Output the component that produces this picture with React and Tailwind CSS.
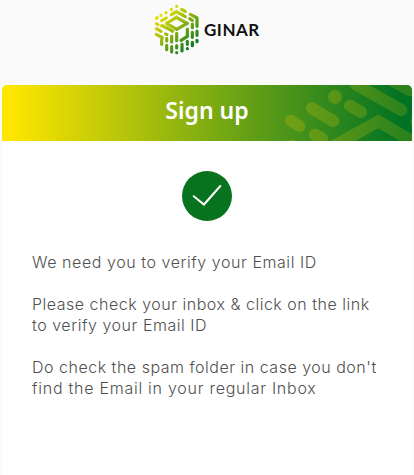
const lines = [
  { text: 'We need you to verify your Email ID', cls: 'tracking-[0.56px]' },
  { text: '' },
  { text: 'Please check your inbox & click on the link', cls: 'tracking-[0.51px]' },
  { text: 'to verify your Email ID', cls: 'tracking-[0.54px]' },
  { text: '' },
  { text: "Do check the spam folder in case you don't", cls: 'tracking-[0.51px]' },
  { text: 'find the Email in your regular Inbox', cls: 'tracking-[0.74px]' },
];

function LogoMark() {
  return (
    <svg className="h-[60px] w-[65px] shrink-0" viewBox="0 0 195 180" fill="none">
      <defs>
        <linearGradient id="mark" gradientUnits="userSpaceOnUse" x1="42" y1="38" x2="138" y2="142">
          <stop offset="0" stopColor="#f5e600" />
          <stop offset="0.45" stopColor="#9cba0c" />
          <stop offset="1" stopColor="#0b7a22" />
        </linearGradient>
      </defs>
      <g stroke="url(#mark)" strokeWidth="9.5" strokeLinecap="round">
        <path d="M95 19h.1M79 28h.1M63 38h.1M110 28l11 6M136 43l19 10M79 44l15-9 27 15M48 46h.1M34 55l3-2M50 62l14-8M134 56l8 5" />
        <path d="M34 71l5 3M52 77l10 6M34 86l14 8M62 102l4 2M34 103l18 10M50 77v1M112 44h.1" />
        <path d="M94 52L66 69M94 52l32 18M126 70L95 88 66 71M66 84l16 9" strokeLinecap="square" />
        <path d="M127 87v22l-19 12M142 72v11M142 97v15M142 127v10M156 54v25M156 93v13M156 121v4" />
        <path d="M50 119v14M65 115v8M65 136v13M80 108v18M80 140v16M95 100v22M95 137v7M95 158h.1M111 132v21M127 124v9M127 146h.1" />
      </g>
    </svg>
  );
}

function HeaderPattern() {
  return (
    <svg className="absolute right-0 top-0 h-14 w-[138px]" viewBox="0 30 414 168" fill="none">
      <defs>
        <linearGradient id="pattern" gradientUnits="userSpaceOnUse" x1="30" y1="0" x2="414" y2="0">
          <stop offset="0" stopColor="#b7b50c" stopOpacity="0.36" />
          <stop offset="1" stopColor="#b7b50c" stopOpacity="0.23" />
        </linearGradient>
      </defs>
      <g stroke="url(#pattern)" strokeLinecap="round" strokeWidth="36">
        <path d="M51 137l25 16M114 100l64 38M228 92l33 19M123 179l21 11M245 28l137 77M350 14l58 32" />
        <path d="M160 224L313 139l120 70" strokeLinecap="butt" />
        <path d="M54 212h.1M428 136v8" />
      </g>
      <circle cx="183" cy="66" r="21" fill="url(#pattern)" />
    </svg>
  );
}

export default function App() {
  return (
    <div className="flex h-[475px] w-[414px] flex-col overflow-hidden bg-[#fafafa]">
      <header className="flex h-[85px] items-start pl-[145px]">
        <LogoMark />
        <div className="-ml-[6px] mt-5 whitespace-nowrap font-['Lato','Liberation_Sans',sans-serif] text-[17px] font-bold leading-5 tracking-[0.5px] text-[#111]">GINAR</div>
      </header>
      <main className="mx-[2px] flex flex-1 flex-col overflow-hidden rounded-t-[5px] bg-white">
        <div className="relative flex h-14 shrink-0 justify-center overflow-hidden bg-[linear-gradient(to_right,#ffe600_2%,#007223_98%)]">
          <HeaderPattern />
          <h1 className="relative mt-[9px] whitespace-nowrap font-['Noto_Sans','Open_Sans',sans-serif] text-[23px] font-semibold leading-8 text-white">Sign up</h1>
        </div>
        <div className="mt-[30px] flex size-[50px] shrink-0 items-center justify-center self-center rounded-full bg-[#07731f]">
          <svg className="size-[50px]" viewBox="0 0 50 50" fill="none" stroke="white" strokeWidth="2" strokeLinecap="round">
            <path d="M11.7 25.2l10.3 8.3L38.3 15" />
          </svg>
        </div>
        <div className="ml-[30px] mt-[31px] font-['Inter','Liberation_Sans',sans-serif] text-[16px] font-light leading-[21px] text-[#505050]">
          {lines.map((line, i) => (
            <div key={i} className="h-[21px] whitespace-nowrap"><span className={line.cls}>{line.text}</span></div>
          ))}
        </div>
      </main>
    </div>
  );
}
